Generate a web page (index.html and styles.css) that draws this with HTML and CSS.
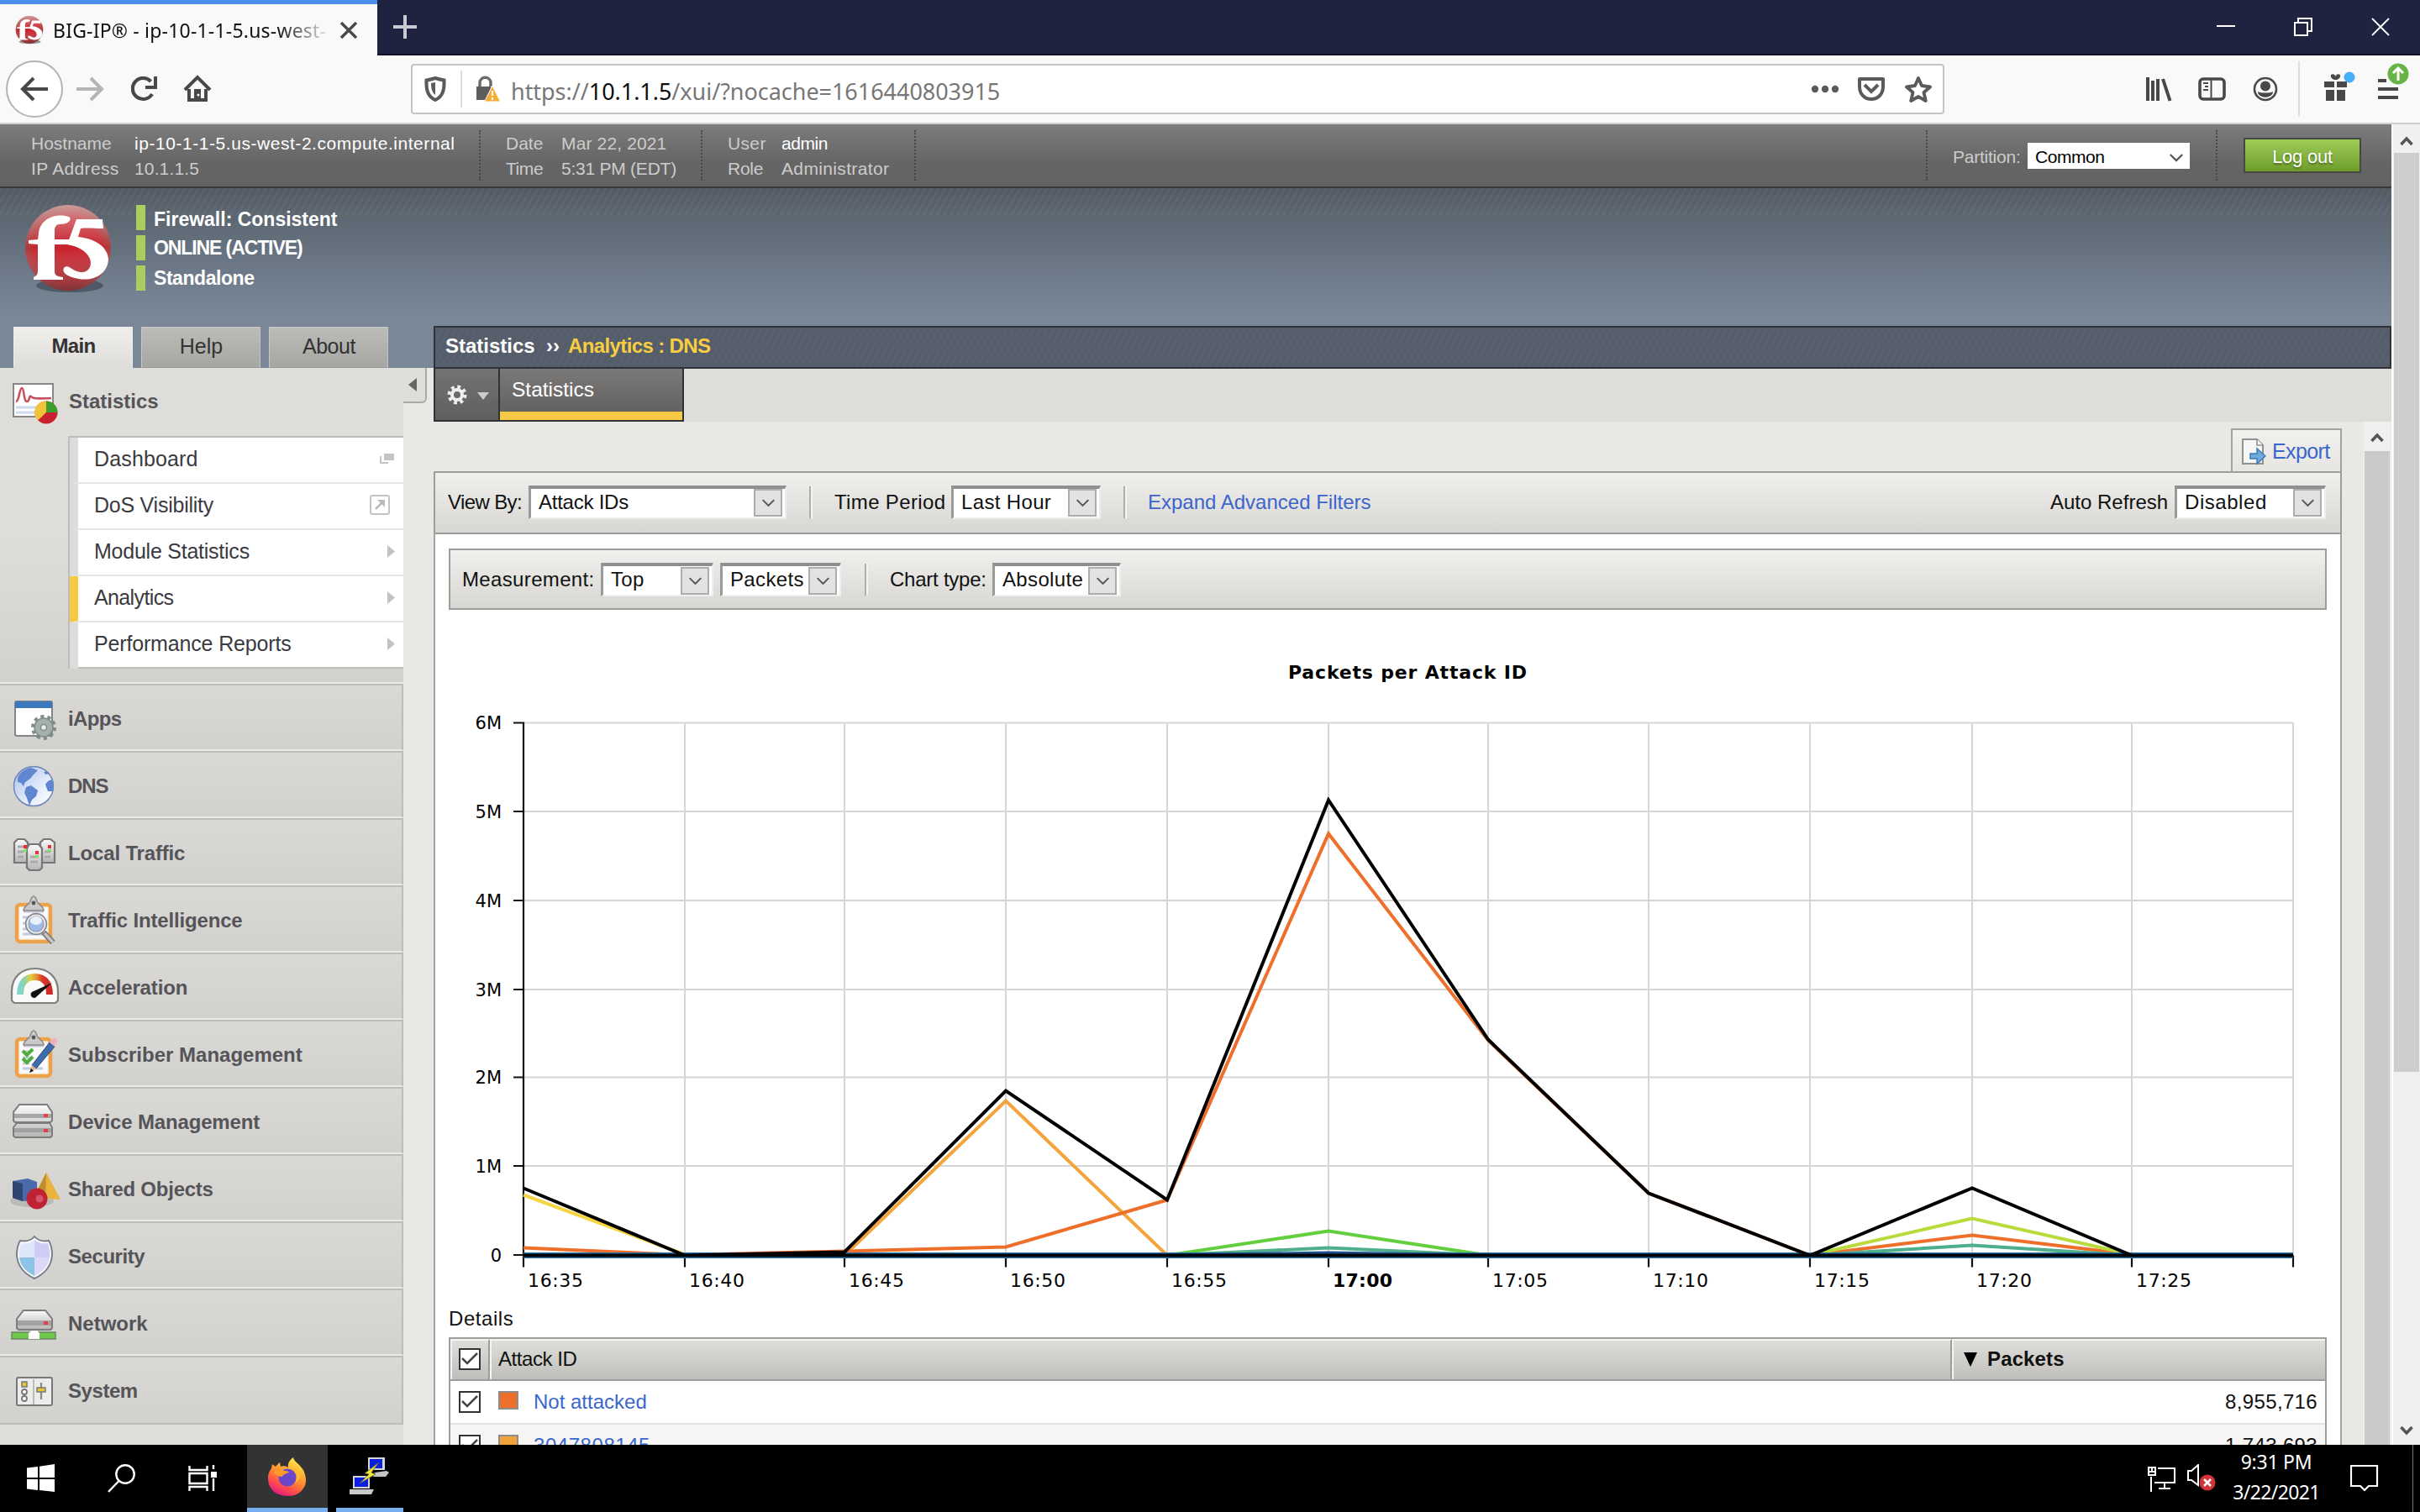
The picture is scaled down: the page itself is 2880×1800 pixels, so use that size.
FILE: index.html
```html
<!DOCTYPE html>
<html lang="en">
<head>
<meta charset="utf-8">
<title>BIG-IP® - ip-10-1-1-5.us-west-2.compute.internal</title>
<link rel="stylesheet" href="styles.css">
</head>
<body>
<svg class="defs" width="0" height="0">
  <defs>
    <radialGradient id="ball" cx=".5" cy=".55" r=".55"><stop offset="0" stop-color="#c8202b"/><stop offset=".7" stop-color="#c4262f"/><stop offset="1" stop-color="#9c4a48"/></radialGradient>
    <linearGradient id="shine" x1="0" y1="0" x2="0" y2="1"><stop offset="0" stop-color="#fff" stop-opacity=".45"/><stop offset=".5" stop-color="#fff" stop-opacity="0"/><stop offset="1" stop-color="#333" stop-opacity=".45"/></linearGradient>
    <linearGradient id="metal" x1="0" y1="0" x2="0" y2="1"><stop offset="0" stop-color="#fafafa"/><stop offset="1" stop-color="#b5b5b5"/></linearGradient>
    <linearGradient id="globe" x1="0" y1="0" x2="1" y2="1"><stop offset="0" stop-color="#a9c0ec"/><stop offset=".6" stop-color="#e4ecfb"/><stop offset="1" stop-color="#fff"/></linearGradient>
    <linearGradient id="gauge" x1="0" y1="0" x2="1" y2="0"><stop offset="0" stop-color="#7fd6cf"/><stop offset=".15" stop-color="#8fd3a8"/><stop offset=".35" stop-color="#e3cf3a"/><stop offset=".55" stop-color="#e8952f"/><stop offset=".75" stop-color="#d93a28"/><stop offset="1" stop-color="#cf2a2a"/></linearGradient>
    <linearGradient id="fox" x1=".8" y1="0" x2=".3" y2="1"><stop offset="0" stop-color="#fff14f"/><stop offset=".45" stop-color="#ff9a2e"/><stop offset=".75" stop-color="#ff4f4a"/><stop offset="1" stop-color="#e31587"/></linearGradient>
    <symbol id="f5" viewBox="0 0 104 106">
      <ellipse cx="54" cy="96" rx="40" ry="8" fill="#2b333d" opacity=".5"/>
      <circle cx="52" cy="51" r="51" fill="url(#ball)"/><circle cx="52" cy="51" r="51" fill="url(#shine)"/>
      <path d="M53 14C42 10 20 13 17 33l-1 8-11 1v4l11 1v31c0 6-3 7-5 8v3h35v-3c-9-1-10-3-10-8V47h17l1-6H36v-9c0-12 7-8 13-10 6-2 7-6 4-8z" fill="#fff"/>
      <path d="M62 17h31l1 11c-10 0-20-1-27 0l-3 10c21 2 36 13 36 27-1 17-17 26-35 23-14-2-21-8-18-13 5-6 11 5 21 5 9 0 13-8 10-16-4-10-16-15-27-17z" fill="#fff"/>
    </symbol>
    <symbol id="chev" viewBox="0 0 20 12"><path d="M2 2l8 8 8-8" fill="none" stroke="#555" stroke-width="2.4"/></symbol>
    <symbol id="tick" viewBox="0 0 20 16"><path d="M1 7l6 6L19 1" fill="none" stroke="#444" stroke-width="2.500"/></symbol>
    <symbol id="board" viewBox="0 0 60 60">
      <rect x="8" y="13" width="40" height="44" rx="4" fill="#f6efe4" stroke="#eca24a" stroke-width="4.500"/>
      <path d="M12 17h32v36H12z" fill="#fbfbff"/>
      <path d="M16 21h24M15 28h8M15 35h8M15 42h8M15 48h24" stroke="#c3c8e0" stroke-width="3"/>
      <path d="M16 20c0-6 6-6 8-11 1-4 2-6 4-6s3 2 4 6c2 5 8 5 8 11z" fill="#c9c9c9" stroke="#8b8b8b" stroke-width="1.5"/>
      <circle cx="28" cy="11" r="2.4" fill="#555"/>
    </symbol>
  </defs>
</svg>

<div class="tabstrip">
  <div class="tab">
    <svg class="tab-logo" width="34" height="34"><use href="#f5"/></svg>
    <span class="tab-title">BIG-IP® - ip-10-1-1-5.us-west-</span>
    <svg class="tab-close" width="22" height="22" viewBox="0 0 22 22"><path d="M2 2l18 18M20 2L2 20" stroke="#4a4a4a" stroke-width="3.4"/></svg>
  </div>
  <svg class="tab-new" width="30" height="30" viewBox="0 0 30 30"><path d="M15 1v28M1 15h28" stroke="#c9cad3" stroke-width="4"/></svg>
  <div class="win-controls">
    <svg width="22" height="22" viewBox="0 0 22 22"><path d="M0 10h22" stroke="#fff" stroke-width="2"/></svg>
    <svg width="22" height="22" viewBox="0 0 22 22"><path d="M1 6h15v15H1zM5 5V1h16v15h-4" fill="none" stroke="#fff" stroke-width="2"/></svg>
    <svg width="22" height="22" viewBox="0 0 22 22"><path d="M1 1l20 20M21 1L1 21" stroke="#fff" stroke-width="1.8"/></svg>
  </div>
</div>

<div class="toolbar">
  <div class="back"><svg width="34" height="30" viewBox="0 0 34 30"><path d="M33 15H3M16 2L3 15l13 13" fill="none" stroke="#48484a" stroke-width="4"/></svg></div>
  <svg class="fwd" width="34" height="30" viewBox="0 0 34 30"><path d="M1 15h30M18 2l13 13-13 13" fill="none" stroke="#b5b5b8" stroke-width="4"/></svg>
  <svg class="reload" width="32" height="30" viewBox="0 0 32 30"><path d="M25 21A12.5 12.5 0 1 1 23.500 6" fill="none" stroke="#48484a" stroke-width="4.200"/><path d="M31 0v15H17v-4h10V0z" fill="#48484a"/></svg>
  <svg class="home" width="34" height="34" viewBox="0 0 34 34"><path d="M2 18L17 3l15 15M7 17v13h20V17" fill="none" stroke="#48484a" stroke-width="4"/><path d="M13 17h8v14h-8z" fill="#48484a"/><circle cx="18" cy="24" r="1.500" fill="#fff"/></svg>
  <div class="urlbar">
    <svg class="shield" width="26" height="30" viewBox="0 0 26 30"><path d="M2.500 4.500Q8 3.500 13 2q5 1.500 10.500 2.500C24 16 22 24 13 28 4 24 2 16 2.500 4.500z" fill="none" stroke="#5a5a5c" stroke-width="4"/><path d="M13 7v15c-4-3-5-8-5-14z" fill="#5a5a5c"/></svg>
    <i class="url-sep"></i>
    <svg class="lock" width="30" height="32" viewBox="0 0 30 32"><path d="M5 14V9c0-9 13-9 13 0v4" fill="none" stroke="#6b6b6d" stroke-width="3.500"/><path d="M1 13h17v16H1z" fill="#5d5d5f"/><path d="M20 12l9.500 19h-19z" fill="#f8ab32" stroke="#fff" stroke-width="1"/><path d="M20 18v6M20 26v3" stroke="#fff" stroke-width="2.200"/></svg>
    <span class="url">https://<b>10.1.1.5</b>/xui/?nocache=1616440803915</span>
    <svg class="dots" width="34" height="10" viewBox="0 0 34 10"><g fill="#5a5a5c"><circle cx="5" cy="5" r="4.200"/><circle cx="17" cy="5" r="4.200"/><circle cx="29" cy="5" r="4.200"/></g></svg>
    <svg class="pocket" width="32" height="30" viewBox="0 0 32 30"><path d="M2 3h28v9c0 20-28 20-28 0z" fill="none" stroke="#5a5a5c" stroke-width="4" stroke-linejoin="round"/><path d="M8 10l8 8 8-8" fill="none" stroke="#5a5a5c" stroke-width="4"/></svg>
    <svg class="star" width="34" height="33" viewBox="0 0 34 33"><path d="M17 3l4 9 10 1.500-7.500 6.500 2.300 10L17 25l-8.800 5 2.300-10L3 13.500 13 12z" fill="none" stroke="#5a5a5c" stroke-width="3.800" stroke-linejoin="round"/></svg>
  </div>
  <svg class="lib" width="31" height="29" viewBox="0 0 31 29"><path d="M2 0v28M8 4v24M14 2v26M20 2l8.500 26" fill="none" stroke="#48484a" stroke-width="4"/></svg>
  <svg class="panes" width="33" height="28" viewBox="0 0 33 28"><rect x="2" y="2" width="29" height="24" rx="4" fill="none" stroke="#48484a" stroke-width="3.600"/><path d="M15.500 2v24" stroke="#48484a" stroke-width="2"/><path d="M6 7h6M8 11h4M6 15h6" stroke="#48484a" stroke-width="1.800"/></svg>
  <svg class="acct" width="30" height="30" viewBox="0 0 30 30"><circle cx="15" cy="15" r="13" fill="none" stroke="#48484a" stroke-width="2.600"/><circle cx="15" cy="11.500" r="6" fill="#48484a"/><path d="M6 18c3 2 15 2 18 0 0 9-18 9-18 0z" fill="#48484a"/></svg>
  <i class="tb-sep"></i>
  <svg class="gift" width="40" height="36" viewBox="0 0 40 36"><path d="M2 12h12v7H2zM17 12h12v7H17zM4 22h10v13H4zM17 22h10v13H17zM10 4c3-2 5 0 5.500 2C16 4 18 2 21 4c1 4-3 6-5.500 6S9 8 10 4z" fill="#48484a"/><circle cx="32" cy="7" r="6.500" fill="#45aef5"/></svg>
  <svg class="menu" width="40" height="46" viewBox="0 0 40 46"><path d="M2 21h10M2 31h24M2 41h24" stroke="#48484a" stroke-width="4"/><circle cx="26" cy="13" r="12.500" fill="#67b346"/><path d="M26 21V7M20 12l6-6 6 6" fill="none" stroke="#fff" stroke-width="3"/></svg>
</div>

<div class="viewport">
  <div class="page">
    <div class="topbar">
      <dl class="pair host"><dt>Hostname</dt><dd class="hi wide5">ip-10-1-1-5.us-west-2.compute.internal</dd><dt class="wide3">IP Address</dt><dd class="wide1">10.1.1.5</dd></dl>
      <dl class="pair date"><dt>Date</dt><dd class="wide1">Mar 22, 2021</dd><dt class="tight4">Time</dt><dd class="tight2">5:31 PM (EDT)</dd></dl>
      <dl class="pair user"><dt class="wide3">User</dt><dd class="hi tight4">admin</dd><dt class="tight2">Role</dt><dd class="wide3">Administrator</dd></dl>
      <div class="partition"><span class="tight2">Partition:</span><div class="flat-select"><span class="tight4">Common</span><svg width="18" height="11"><use href="#chev"/></svg></div></div>
      <div class="logout"><span class="tight2">Log out</span></div>
    </div>
    <div class="below">
      <div class="left">
        <div class="brand">
          <svg class="brand-ball" width="104" height="106"><use href="#f5"/></svg>
          <ul class="status"><li><span>Firewall: Consistent</span></li><li><span class="tight10">ONLINE (ACTIVE)</span></li><li><span class="tight4">Standalone</span></li></ul>
        </div>
        <div class="tabs"><div class="active"><span class="tight6">Main</span></div><div><span>Help</span></div><div><span class="tight4">About</span></div></div>
        <div class="side-row">
          <div class="side">
            <div class="stats">
              <div class="nav-head">
                <svg width="60" height="60" viewBox="0 0 60 60"><rect x="4" y="8" width="47" height="39" fill="#fff" stroke="#888" stroke-width="2"/><path d="M7 36h28M7 42h24" stroke="#c9daf0" stroke-width="3"/><path d="M7 29c4 0 4-16 7-16s2 16 6 16 2-8 5-6 1 3 24 2" fill="none" stroke="#c9525a" stroke-width="2.600"/><circle cx="43" cy="42" r="13.500" fill="#c8202e"/><path d="M43 42L33 51.500A13.500 13.500 0 0 1 43 28.500z" fill="#efc33a"/><path d="M43 42V28.500A13.500 13.500 0 0 1 56.500 42z" fill="#3f9f2e"/></svg>
                <span>Statistics</span>
              </div>
              <ul class="submenu">
                <li><span class="wide1">Dashboard</span><svg width="18" height="14" viewBox="0 0 18 14"><path d="M5 1h12v8H5z" fill="#c4c4c4"/><path d="M1 4v8h9" fill="none" stroke="#c4c4c4" stroke-width="2"/></svg></li>
                <li class="ext"><span class="tight2">DoS Visibility</span><svg width="24" height="24" viewBox="0 0 24 24"><rect x="1" y="1" width="22" height="22" rx="2" fill="#fff" stroke="#c4c4c4" stroke-width="2"/><path d="M7 17l7-7" stroke="#bbb" stroke-width="2.500"/><path d="M9 6h9v9z" fill="#bbb"/></svg></li>
                <li><span class="tight2">Module Statistics</span><svg width="9" height="15" viewBox="0 0 9 15"><path d="M0 0l9 7.500L0 15z" fill="#c2c2c2"/></svg></li>
                <li class="on"><span class="tight6">Analytics</span><svg width="9" height="15" viewBox="0 0 9 15"><path d="M0 0l9 7.500L0 15z" fill="#c2c2c2"/></svg></li>
                <li><span class="tight1">Performance Reports</span><svg width="9" height="15" viewBox="0 0 9 15"><path d="M0 0l9 7.500L0 15z" fill="#c2c2c2"/></svg></li>
              </ul>
            </div>
            <div class="nav"><svg width="60" height="60" viewBox="0 0 60 60"><rect x="6" y="11" width="44" height="41" rx="2" fill="#fff" stroke="#858585" stroke-width="2"/><path d="M6 11h44v8H6z" fill="#3c78bd"/><circle cx="40" cy="42" r="12.500" fill="none" stroke="#7f8c88" stroke-width="5" stroke-dasharray="4 3.850"/><circle cx="40" cy="42" r="11" fill="#a4b0ad" stroke="#7f8c88" stroke-width="1.500"/><circle cx="40" cy="42" r="3.500" fill="#e9eeec" stroke="#7f8c88" stroke-width="1.500"/></svg><span class="tight6">iApps</span></div>
            <div class="nav"><svg width="60" height="60" viewBox="0 0 60 60"><circle cx="28" cy="32" r="23.500" fill="url(#globe)" stroke="#6d86b8" stroke-width="1.500"/><path d="M9 22c3-7 9-11 16-12l8 3-5 5-4 5-6 4-2 5-3-4-4-1zM19 33l6-2 8 6-2 7-5 4-3 7-3-9-3-6zM51 24c-4 0-7 2-9 6l3 8 6 0zM40 15l4-1 3 3-5 1z" fill="#5f86cf"/></svg><span class="tight10">DNS</span></div>
            <div class="nav"><svg width="60" height="60" viewBox="0 0 60 60"><g fill="url(#metal)" stroke="#777" stroke-width="2.200"><path d="M5 19l4-4h8l4 4v24H5zM36 19l4-4h8l5 4v24H36z"/><path d="M20 26l3-5h11l4 5v23l-3 3H23l-3-3z"/></g><path d="M9 24h7M9 30h7M9 36h7M41 30h7M41 36h7M24 36h9M24 42h9" stroke="#aaa" stroke-width="3"/><path d="M16 22h4v4h-4zM45 22h4v4h-4zM30 29h4v4h-4z" fill="#e5303c"/><path d="M16 27h4v3h-4zM45 27h4v3h-4zM30 34h4v3h-4z" fill="#7ce35a"/></svg><span class="tight1">Local Traffic</span></div>
            <div class="nav"><svg width="60" height="60" viewBox="0 0 60 60"><use href="#board"/><path d="M40 46l11 12" stroke="#777" stroke-width="7"/><path d="M41 47l10 11" stroke="#c4c4c4" stroke-width="3.500"/><circle cx="31" cy="36" r="11" fill="#9dbbe6" stroke="#888" stroke-width="4.500"/><circle cx="31" cy="36" r="10.500" fill="none" stroke="#e4e8ee" stroke-width="2"/><ellipse cx="31" cy="32" rx="7" ry="5" fill="#e8f1fc"/></svg><span class="tight1">Traffic Intelligence</span></div>
            <div class="nav"><svg width="60" height="60" viewBox="0 0 60 60"><path d="M2 47V36C2 19 14 9 29.500 9S57 19 57 36v11l-3 3H5z" fill="#fafafa" stroke="#808080" stroke-width="2.200"/><path d="M12 40c0-14 7-21 17.500-21S47 26 47 40" fill="none" stroke="url(#gauge)" stroke-width="8"/><path d="M50 26L32 42a4 4 0 1 1-4-6z" fill="#111"/></svg><span class="tight1">Acceleration</span></div>
            <div class="nav"><svg width="60" height="60" viewBox="0 0 60 60"><use href="#board"/><path d="M15 27l5 5 7-7M15 36l5 5 7-7" fill="none" stroke="#4fae3a" stroke-width="4"/><path d="M26 44L47 17l6 5-22 26z" fill="#3f6cab" stroke="#2c4d80" stroke-width="1"/><path d="M47 17l4-5c3-1 6 2 5 5l-3 5z" fill="#eeb0c0"/><path d="M26 44l5 4-8 5z" fill="#ddb783"/><path d="M23 53l2-5 3 3z" fill="#111"/></svg><span>Subscriber Management</span></div>
            <div class="nav"><svg width="60" height="60" viewBox="0 0 60 60"><g fill="url(#metal)" stroke="#7d7d7d" stroke-width="2"><path d="M4 20l7-9h33l6 9v10l-2 2H6l-2-2zM4 38l4-5h39l3 5v10l-2 2H6l-2-2z"/></g><path d="M5 22h44v5H5zM5 39h44v5H5z" fill="#999" opacity=".8"/><path d="M40 22h5v4h-5zM40 40h5v4h-5z" fill="#e5404a"/></svg><span class="tight1">Device Management</span></div>
            <div class="nav"><svg width="60" height="60" viewBox="0 0 60 60"><ellipse cx="26" cy="46" rx="26" ry="7" fill="#aaa" opacity=".6"/><path d="M3 22l18-3 11 4v22l-17 1-12-4z" fill="#4a6ba8"/><path d="M3 22l12 3v21L3 42z" fill="#2f4472"/><path d="M43 12L30 38l14 5 16 1z" fill="#e9b33d"/><path d="M43 12L30 38l12 5z" fill="#c08f2c"/><circle cx="32" cy="43" r="12.500" fill="#bf2233"/><circle cx="35" cy="43" r="4.500" fill="#e0688a" opacity=".7"/></svg><span class="tight2">Shared Objects</span></div>
            <div class="nav"><svg width="60" height="60" viewBox="0 0 60 60"><path d="M29 8c4 5 11 6 17 5 3 5 4 10 4 17-1 14-10 23-21 28C18 53 9 44 8 30c0-7 1-12 4-17 6 1 13 0 17-5z" fill="#fff" stroke="#7a7f8c" stroke-width="2"/><path d="M29 12v21H11c-1-6 0-11 2-17 7 1 12-1 16-4z" fill="#dfe6fa"/><path d="M29 12c4 3 9 5 16 4 2 6 3 11 2 17H29z" fill="#cfcdf4"/><path d="M11 33h18v22C19 50 12 43 11 33z" fill="#8cc3e6"/><path d="M47 33H29v22c10-5 17-12 18-22z" fill="#dcd9f8"/></svg><span class="tight4">Security</span></div>
            <div class="nav"><svg width="60" height="60" viewBox="0 0 60 60"><path d="M8 26l8-10h26l8 10v11l-2 2H10l-2-2z" fill="url(#metal)" stroke="#7d7d7d" stroke-width="2"/><path d="M9 28h40v6H9z" fill="#999" opacity=".8"/><path d="M40 29h5v4h-5z" fill="#e5404a"/><path d="M2 42h52v8H2z" fill="#6fca4c" stroke="#6c8560" stroke-width="1.500"/><path d="M22 50v-7l4-3h6l3 3v7z" fill="#fff"/></svg><span>Network</span></div>
            <div class="nav"><svg width="60" height="60" viewBox="0 0 60 60"><rect x="8" y="16" width="42" height="33" rx="2" fill="#ececea" stroke="#777" stroke-width="2"/><path d="M28 18v30" stroke="#bbb" stroke-width="2"/><path d="M14 21h6v6h-6z" fill="#e3c72c" stroke="#777" stroke-width="1.500"/><circle cx="17" cy="33" r="3" fill="#fff" stroke="#777" stroke-width="1.800"/><circle cx="17" cy="41" r="3" fill="#fff" stroke="#777" stroke-width="1.800"/><path d="M37 22v20" stroke="#888" stroke-width="2.200"/><path d="M32 28h10v5H32z" fill="#e3c72c" stroke="#777" stroke-width="1.500"/></svg><span class="tight4">System</span></div>
          </div>
          <div class="toggle"><svg width="10" height="16" viewBox="0 0 10 16"><path d="M10 0v16L0 8z" fill="#666"/></svg></div>
        </div>
      </div>

      <div class="main">
        <div class="crumbs"><b>Statistics</b><b class="raquo">››</b><b class="here tight6">Analytics : DNS</b></div>
        <div class="subtabs">
          <div class="gear"><svg width="24" height="24" viewBox="0 0 24 24"><circle cx="12" cy="12" r="9" fill="none" stroke="#eee" stroke-width="5" stroke-dasharray="3.600 3.470"/><circle cx="12" cy="12" r="6" fill="none" stroke="#eee" stroke-width="4"/></svg><svg width="14" height="9" viewBox="0 0 14 9"><path d="M0 0h14L7 9z" fill="#ccc"/></svg></div>
          <div class="subtab"><span>Statistics</span></div>
        </div>
        <div class="frame-row">
          <div class="frame">
            <div class="export"><svg width="30" height="32" viewBox="0 0 30 32"><path d="M2 1h17l7 7v22H2z" fill="#f6f6f4" stroke="#909090" stroke-width="2"/><path d="M19 1v7h7" fill="#fff" stroke="#909090" stroke-width="1.600"/><path d="M11 18h8v-6l10 9-10 9v-6h-8z" fill="#6fa9dc" stroke="#3f7cb8" stroke-width="1.500"/></svg><span class="tight6">Export</span></div>
            <div class="filters">
              <span class="tight6">View By:</span><div class="select"><span class="tight2">Attack IDs</span><i><svg width="17" height="11"><use href="#chev"/></svg></i></div><i class="vsep"></i>
              <span class="wide3">Time Period</span><div class="select"><span class="wide3">Last Hour</span><i><svg width="17" height="11"><use href="#chev"/></svg></i></div><i class="vsep"></i>
              <a>Expand Advanced Filters</a>
              <span>Auto Refresh</span><div class="select"><span class="wide5">Disabled</span><i><svg width="17" height="11"><use href="#chev"/></svg></i></div>
            </div>
            <div class="panel">
              <div class="measure">
                <span class="wide3">Measurement:</span><div class="select"><span class="wide3">Top</span><i><svg width="17" height="11"><use href="#chev"/></svg></i></div><div class="select"><span class="wide3">Packets</span><i><svg width="17" height="11"><use href="#chev"/></svg></i></div><i class="vsep"></i>
                <span class="tight2">Chart type:</span><div class="select"><span class="wide3">Absolute</span><i><svg width="17" height="11"><use href="#chev"/></svg></i></div>
              </div>
              <svg class="chart" width="2235" height="820" viewBox="534 727.5 2235 820">
                <text class="chart-title" x="1533" y="808" textLength="284">Packets per Attack ID</text>
                <path class="grid" d="M623 861H2729M623 966.500H2729M623 1072.500H2729M623 1178.500H2729M623 1283H2729M623 1388.500H2729M815 861v634M1005 861v634M1197 861v634M1389 861v634M1581 861v634M1771 861v634M1962 861v634M2154 861v634M2347 861v634M2537 861v634M2729 861v634"/>
                <path class="axis" d="M623 860V1509M611 861h12M611 966.500h12M611 1072.500h12M611 1178.500h12M611 1283h12M611 1388.500h12M611 1494.500h12M815 1495v14M1005 1495v14M1197 1495v14M1389 1495v14M1581 1495v14M1771 1495v14M1962 1495v14M2154 1495v14M2347 1495v14M2537 1495v14M2729 1495v14"/>
                <g class="ylab"><text x="597" y="868">6M</text><text x="597" y="974">5M</text><text x="597" y="1080">4M</text><text x="597" y="1186">3M</text><text x="597" y="1290">2M</text><text x="597" y="1396">1M</text><text x="597" y="1502">0</text></g>
                <g class="series">
                  <path stroke="#f6d544" d="M623 1423L815 1494"/>
                  <path stroke="#f4a43a" d="M1005 1495L1197 1311 1389 1495"/>
                  <path stroke="#ee6f2a" d="M623 1486L815 1494.500 1005 1490 1197 1485 1389 1429 1581 993 1771 1239 1962 1421 2154 1495 2347 1471 2537 1494"/>
                  <path stroke="#b9dc3c" d="M2154 1495L2347 1451 2537 1494"/>
                  <path stroke="#63cf3e" d="M1389 1495L1581 1466 1771 1495"/>
                  <path stroke="#4fae8c" d="M1389 1495L1581 1486 1771 1495M2154 1495L2347 1483 2537 1495"/>
                  <path class="base" stroke="#2571a8" d="M623 1495H2729"/>
                  <path stroke="#1c4f8a" d="M1389 1495L1581 1492 1771 1495"/>
                  <path stroke="#000" d="M623 1415L815 1495 1005 1491 1197 1299 1389 1429 1581 953 1771 1238 1962 1421 2154 1495 2347 1415 2537 1495H2729M623 1495H2729"/>
                </g>
                <g class="xlab"><text x="628" y="1532" textLength="66">16:35</text><text x="820" y="1532" textLength="66">16:40</text><text x="1010" y="1532" textLength="66">16:45</text><text x="1202" y="1532" textLength="66">16:50</text><text x="1394" y="1532" textLength="66">16:55</text><text class="bold" x="1586" y="1532" textLength="71">17:00</text><text x="1776" y="1532" textLength="66">17:05</text><text x="1967" y="1532" textLength="66">17:10</text><text x="2159" y="1532" textLength="66">17:15</text><text x="2352" y="1532" textLength="66">17:20</text><text x="2542" y="1532" textLength="66">17:25</text></g>
              </svg>
              <div class="details"><span class="wide5">Details</span></div>
              <div class="table">
                <div class="row head"><div><i class="check"><svg width="20" height="16"><use href="#tick"/></svg></i></div><div><span class="tight4">Attack ID</span></div><div class="num"><svg width="16" height="17" viewBox="0 0 16 17"><path d="M0 0h16L8 17z"/></svg><b class="wide1">Packets</b></div></div>
                <div class="row"><div><i class="check"><svg width="20" height="16"><use href="#tick"/></svg></i></div><div><i class="swatch one"></i><a>Not attacked</a></div><div class="num"><span class="wide3">8,955,716</span></div></div>
                <div class="row alt"><div><i class="check"><svg width="20" height="16"><use href="#tick"/></svg></i></div><div><i class="swatch two"></i><a class="wide5">3047808145</a></div><div class="num"><span class="wide3">1,743,693</span></div></div>
              </div>
            </div>
          </div>
          <div class="inner-scroll"><svg width="16" height="14" viewBox="0 0 16 14"><path d="M1.500 11L8 4l6.500 7" fill="none" stroke="#555" stroke-width="3.500"/></svg><i></i></div>
        </div>
      </div>
    </div>
  </div>
  <div class="outer-scroll"><svg width="16" height="14" viewBox="0 0 16 14"><path d="M1.500 11L8 4l6.500 7" fill="none" stroke="#555" stroke-width="3.500"/></svg><i></i><svg width="16" height="14" viewBox="0 0 16 14"><path d="M1.500 3L8 10l6.500-7" fill="none" stroke="#555" stroke-width="3.500"/></svg></div>
</div>

<div class="taskbar">
  <svg class="t-win" width="34" height="34" viewBox="0 0 34 34"><path d="M0 4.500L13 3v13H0zM15 2.700L33 0v16H15zM0 18h13v13L0 29.500zM15 18h18v15L15 31z" fill="#fff"/></svg>
  <svg class="t-search" width="34" height="34" viewBox="0 0 34 34"><circle cx="21" cy="12" r="10.700" fill="none" stroke="#fff" stroke-width="2.400"/><path d="M13.500 20L1 33" stroke="#fff" stroke-width="2.400"/></svg>
  <svg class="t-view" width="34" height="32" viewBox="0 0 34 32"><path d="M1.500 1v5h21V1M1.500 10h21v12h-21zM1.500 31v-5h21v5M30 0v5M30 16v15" fill="none" stroke="#fff" stroke-width="2.400"/><path d="M27 8h7v7h-7z" fill="#fff"/></svg>
  <div class="t-fox"><svg width="48" height="48" viewBox="0 0 48 48"><path d="M1 26c0-6 2-9 4-12l1-5 4 3c2-2 3-4 5-5l1 5c3-1 6-1 9 1-1-5 2-9 6-12 1 5 5 6 8 10l4 5c4 9 4 16 0 22-4 6-10 9-18 9C12 47 1 40 1 26z" fill="url(#fox)"/><circle cx="24" cy="25" r="10.500" fill="#6a46c9"/><path d="M8 19c6-5 10-3 13-2 3 0 5 1 5 2-4 1-8 3-8 5-5 0-8-3-10-5z" fill="#ff9b2b"/><path d="M30 11c7 6 7 14 3 21 8-5 9-16-3-21z" fill="#ffbf35"/></svg></div>
  <div class="t-putty"><svg width="48" height="48" viewBox="0 0 48 48"><path d="M22 1h20v15H22z" fill="#d5d5d5"/><path d="M24 3h15v11H24z" fill="#0a1fe0"/><path d="M30 19l14-2 3 2-4 5H28z" fill="#c4c4c4"/><path d="M4 23h20v15H4z" fill="#d5d5d5"/><path d="M6 25h16v11H6z" fill="#0a1fe0"/><path d="M0 39h29l-3 6H0z" fill="#c9c9c9"/><path d="M35 7L18 20l5 1-11 11 19-11-5-2z" fill="#f1e72b" stroke="#555" stroke-width=".8"/></svg></div>
  <div class="tray">
    <svg width="34" height="32" viewBox="0 0 34 32"><path d="M12 4h20v17H8M20 21v7M13 28h14M4 14v18" fill="none" stroke="#fff" stroke-width="2"/><path d="M1 3h8v9H1zM1 8h8M5 3v5" fill="none" stroke="#fff" stroke-width="2"/></svg>
    <svg width="34" height="34" viewBox="0 0 34 34"><path d="M1 8h4l8-7v24l-8-6H1z" fill="none" stroke="#fff" stroke-width="2"/><circle cx="24" cy="22" r="9.500" fill="#d2343a"/><path d="M20 18l8 8M28 18l-8 8" stroke="#fff" stroke-width="2.500"/></svg>
    <div class="clock"><span class="tight2">9:31 PM</span><span class="tight6">3/22/2021</span></div>
    <svg width="34" height="32" viewBox="0 0 34 32"><path d="M1 1h31v24h-10l-5 5-5-5H1z" fill="none" stroke="#fff" stroke-width="2.200"/></svg>
    <i></i>
  </div>
</div>
</body>
</html>
```
FILE: styles.css
```css
* { box-sizing: border-box; margin: 0; padding: 0; }
body { width: 2880px; height: 1800px; overflow: hidden; display: flex; flex-direction: column; font-family: "Liberation Sans", Arial, sans-serif; font-size: 24px; color: #111; white-space: nowrap; background: #e9e8e4; }
i { font-style: normal; display: block; }
svg { display: block; flex: none; }
ul { list-style: none; }
.defs { position: absolute; }

/* letter tracking */
.tight1 { letter-spacing: -.16px; }
.tight2 { letter-spacing: -.24px; }
.tight4 { letter-spacing: -.44px; }
.tight6 { letter-spacing: -.62px; }
.tight10 { letter-spacing: -1.1px; }
.wide1 { letter-spacing: .14px; }
.wide3 { letter-spacing: .35px; }
.wide5 { letter-spacing: .55px; }

/* browser chrome */
.tabstrip { height: 66px; flex: none; display: flex; align-items: center; background: #20233f; border-bottom: 2px solid #0f1028; font-family: "Noto Sans", sans-serif; }
.tab { width: 449px; height: 66px; align-self: flex-start; display: flex; align-items: center; padding: 1px 0 0 18px; background: #f9f9fa; border-top: 5px solid #4a90ea; }
.tab-title { width: 333px; margin-left: 11px; font-size: 23px; letter-spacing: .2px; overflow: hidden; -webkit-mask-image: linear-gradient(90deg, #000 80%, transparent); mask-image: linear-gradient(90deg, #000 80%, transparent); }
.tab-close { margin-left: 8px; }
.tab-new { margin-left: 18px; }
.win-controls { margin-left: auto; margin-right: 36px; display: flex; gap: 70px; }
.toolbar { height: 82px; flex: none; display: flex; align-items: center; background: #f9f9fa; border-bottom: 2px solid #cfcfd1; }
.back { width: 68px; height: 68px; margin-left: 7px; border: 2px solid #b3b3b5; border-radius: 50%; background: #fff; display: flex; align-items: center; justify-content: center; }
.fwd { margin-left: 15px; }
.reload { margin-left: 32px; }
.home { margin-left: 30px; }
.urlbar { width: 1825px; height: 60px; margin-left: 237px; border: 2px solid #c4c4c6; border-radius: 4px; background: #fff; display: flex; align-items: center; }
.shield { margin-left: 14px; }
.url-sep { width: 2px; height: 44px; margin-left: 17px; background: #dcdcde; }
.lock { margin-left: 16px; }
.url { width: 582px; margin-left: 12px; padding-top: 4px; font: 27px "Noto Sans", sans-serif; letter-spacing: -.04px; color: #777; }
.url b { font-weight: 400; color: #0c0c0d; }
.dots { margin-left: 965px; }
.pocket { margin-left: 22px; }
.star { margin-left: 23px; }
.lib { margin-left: 240px; }
.panes { margin-left: 31px; }
.acct { margin-left: 32px; }
.tb-sep { width: 2px; height: 66px; margin-left: 24px; background: #dcdcde; }
.gift { margin-left: 27px; margin-bottom: 6px; }
.menu { margin-left: 24px; margin-bottom: 16px; }

.viewport { height: 1572px; flex: none; display: flex; }
.page { width: 2846px; flex: none; display: flex; flex-direction: column; overflow: hidden; }

/* identity bar */
.topbar { height: 76px; flex: none; display: flex; align-items: center; background: linear-gradient(#7d7d7d, #656565 60%, #636363); border-bottom: 2px solid #383b3e; color: #ccc; font-size: 21px; }
.pair { height: 60px; padding-top: 1px; display: grid; grid-template-rows: 30px 30px; align-items: center; border-right: 2px dotted #484848; }
.pair dt, .pair dd { justify-self: start; }
.host { width: 572px; padding-left: 37px; grid-template-columns: 123px 1fr; }
.date { width: 264px; padding-left: 30px; grid-template-columns: 66px 1fr; }
.user { width: 254px; padding-left: 30px; grid-template-columns: 64px 1fr; }
.hi { color: #fff; }
.partition { width: 347px; height: 60px; margin-left: 1202px; padding-left: 30px; display: flex; align-items: center; border-left: 2px dotted #484848; border-right: 2px dotted #484848; }
.partition > span { width: 89px; padding-top: 3px; }
.flat-select { width: 193px; height: 31px; padding: 3px 7px 0 9px; display: flex; align-items: center; justify-content: space-between; background: #fff; color: #000; }
.flat-select svg { margin-top: 2px; }
.logout { width: 140px; height: 42px; margin-left: 31px; border: 2px solid #45493f; background: linear-gradient(#a0cc58, #6d9c2c); color: #fff; font-size: 22px; text-shadow: 0 2px 2px #4c6c20; display: flex; align-items: center; justify-content: center; padding-top: 3px; }

/* banner and columns */
.below { flex: 1; min-height: 0; display: grid; grid-template-columns: 516px 1fr; background: repeating-linear-gradient(120deg, rgba(255,255,255,.035) 0 3px, transparent 3px 7px) 0 0/100% 32px no-repeat, linear-gradient(#525a63, #5c6671 32px, #687482 80px, #748191 126px, #7a8797 152px, #7a8797 214px) 0 0/100% 214px no-repeat, #e9e8e4; }
.left, .main { min-width: 0; display: flex; flex-direction: column; }
.brand { height: 165px; flex: none; display: flex; padding: 20px 0 0 29px; }
.status { margin-left: 29px; display: flex; flex-direction: column; gap: 6px; color: #fff; font-size: 23px; font-weight: 700; }
.status li { height: 30px; display: flex; align-items: center; padding: 4px 0 0 10px; border-left: 11px solid #aacd60; }
.status li:nth-child(2), .status li:nth-child(3) { padding-top: 0; }
.tabs { height: 49px; flex: none; display: flex; gap: 10px; padding-left: 16px; font-size: 25px; color: #333; }
.tabs div { width: 142px; padding: 0 0 3px 1px; display: flex; align-items: center; justify-content: center; background: linear-gradient(#bcbcb8, #a5a5a1); border: 1px solid #c6c6c3; border-bottom: 1px solid #9a9a96; }
.tabs .active { background: linear-gradient(#f0efec, #deddd9); border-color: #eee; border-bottom-color: #deddd9; font-weight: 700; font-size: 24px; }
.side-row { flex: 1; display: flex; align-items: flex-start; }
.side { width: 480px; height: 1282px; background: #deddd9; color: #555459; }
.stats { height: 376px; background: linear-gradient(#deddd9 55%, #d2d1cd); display: flex; flex-direction: column; border-bottom: 2px solid #ecebe8; }
.nav-head { height: 81px; display: flex; align-items: center; padding-left: 12px; }
.nav-head span, .nav span { margin-left: 9px; font-weight: 700; font-size: 24px; }
.nav-head span { margin: -2px 0 0 10px; }
.submenu { height: 277px; margin-left: 81px; border: 2px solid #bdbdba; border-right: 0; background: #fff; }
.submenu li { height: 55px; display: flex; align-items: center; justify-content: space-between; padding: 0 10px 3px 19px; border-left: 10px solid #dcdcdc; border-bottom: 2px solid #e6e6e6; font-size: 25px; color: #3a3a40; }
.submenu li.on { border-left-color: #f7ca45; }
.submenu li:last-child { border-bottom: 0; padding-bottom: 5px; }
.submenu .ext { padding-right: 16px; }
.nav { height: 80px; display: flex; align-items: center; padding-left: 12px; border-top: 2px solid #bdbcb9; border-bottom: 2px solid #ecebe8; border-right: 2px solid #bdbcb9; background: linear-gradient(#dad9d5, #d2d1cd); }
.nav span { padding-top: 3px; }
.side .nav:last-child { border-bottom-color: #bdbcb9; height: 82px; padding-bottom: 2px; }
.toggle { width: 28px; height: 42px; display: flex; align-items: center; justify-content: flex-end; padding-right: 10px; background: #deddd9; border: 2px solid #aaa9a6; border-width: 0 2px 2px 0; border-radius: 0 0 6px 0; }

/* main column */
.crumbs { height: 51px; flex: none; margin-top: 164px; padding: 0 0 4px 12px; display: grid; grid-template-columns: 120px 26px 1fr; align-items: center; justify-items: start; background: repeating-linear-gradient(120deg, rgba(255,255,255,.02) 0 3px, transparent 3px 7px), #545d69; border: 2px solid #2e3338; color: #fff; font-size: 24px; }
.here { color: #f8cd42; }
.subtabs { height: 63px; flex: none; display: flex; background: #deddd9; }
.gear { width: 79px; display: flex; align-items: center; gap: 12px; padding-left: 14px; background: linear-gradient(#757372, #605f5e); border: 2px solid #2e3338; border-top: 0; }
.gear svg + svg { margin-top: 4px; }
.subtab { width: 219px; padding: 11px 0 0 14px; background: linear-gradient(#7b7978, #5f5e5d); border: 2px solid #2e3338; border-width: 0 2px 2px 0; box-shadow: inset 0 -10px #f7ca45; color: #fff; font-size: 24.500px; }
.frame-row { flex: 1; min-height: 0; display: flex; }
.frame { width: 2297px; min-width: 0; padding: 8px 26px 0 0; display: flex; flex-direction: column; }
.export { width: 132px; height: 51px; flex: none; align-self: flex-end; display: flex; align-items: center; gap: 7px; padding: 2px 0 0 10px; border: 2px solid #a3a3a1; border-bottom: 0; background: linear-gradient(#f1f0ee, #e6e5e2); color: #3a66cc; font-size: 25px; }
a { color: #3a66cc; }
.filters, .measure { border: 2px solid #9d9d9b; background: linear-gradient(#f1f0ee, #d7d6d2); display: grid; align-items: center; justify-items: start; }
.filters { height: 75px; flex: none; padding: 0 0 2px 15px; grid-template-columns: 96px 334px 30px 139px 205px 29px 1074px 148px 1fr; }
.select { height: 40px; display: flex; align-items: center; justify-content: space-between; padding: 0 3px 0 9px; background: #fff; border: 2px solid #eee; border-top: 4px solid #8f8f8f; border-left: 3px solid #9a9a9a; justify-self: stretch; }
.select i { width: 34px; height: 33px; display: flex; align-items: center; justify-content: center; background: #e2e2e2; border: 2px solid #adadad; }
.select span { margin-top: -2px; }
.filters .select { margin-right: 27px; }
.filters .select:last-child { margin-right: 17px; }
.vsep { width: 2px; height: 38px; background: #aeaeac; box-shadow: 2px 0 #f4f4f2; }
.panel { flex: 1; min-height: 0; border: 2px solid #a3a3a1; border-width: 0 2px; background: #fff; padding: 17px 16px 0; overflow: hidden; }
.measure { height: 73px; padding: 1px 0 0 14px; grid-template-columns: 165px 142px 172px 30px 122px 153px 1fr; }
.measure .select { width: 134px; }
.measure .select:nth-of-type(2) { width: 144px; }
.measure .select:nth-of-type(3) { width: 153px; }
.chart { margin-top: 1px; font-family: "DejaVu Sans", Verdana, sans-serif; font-size: 22px; }
.chart-title { font-weight: 700; font-size: 22px; }
.ylab { font-size: 21px; }
.grid { fill: none; stroke: #d6d6d6; stroke-width: 2; }
.axis { fill: none; stroke: #111; stroke-width: 2.200; }
.series path { fill: none; }
.series { stroke-width: 4; stroke-linejoin: miter; }
.series .base { stroke-width: 7; }
.ylab { text-anchor: end; }
.bold { font-weight: 700; }
.details { height: 45px; display: flex; align-items: center; }
.table { border: 2px solid #9d9d9b; }
.row { height: 52px; display: grid; grid-template-columns: 47px 1740px 1fr; align-items: center; border-bottom: 2px solid #e2e2e2; }
.row > div { display: flex; align-items: center; padding-left: 10px; height: 100%; }
.row.head { height: 50px; border-bottom-color: #9d9d9b; }
.row.head > div { padding-left: 8px; padding-bottom: 2px; background: linear-gradient(#dfdeda, #bfbeba); border-left: 2px solid #f4f4f2; border-top: 2px solid #f4f4f2; border-right: 2px solid #9d9d9b; }
.row.head > .num { justify-content: flex-start; padding-left: 12px; gap: 12px; border-right: 0; }
.row.alt { background: #f6f5f3; }
.row .num { justify-content: flex-end; padding-right: 9px; }
.row.head .num { justify-content: flex-start; }
.check { width: 26px; height: 26px; border: 2px solid #333; background: #fff; display: flex; align-items: center; justify-content: center; }
.swatch { width: 24px; height: 22px; margin: 0 18px 4px 0; border: 2px solid #8c8c8c; }
.one { background: #ee6f2a; }
.two { background: #f2a23b; }

/* scrollbars */
.inner-scroll { width: 32px; display: flex; flex-direction: column; align-items: center; background: #f0f0f0; padding-top: 12px; }
.inner-scroll i { width: 30px; margin-top: 9px; flex: 1; background: #cacaca; }
.outer-scroll { width: 34px; padding: 13px 0 10px; display: flex; flex-direction: column; align-items: center; background: #f0f0f0; border-left: 2px solid #fff; }
.outer-scroll i { width: 30px; height: 1094px; margin: 7px 0 auto; background: #cdcdcd; }

/* taskbar */
.taskbar { height: 80px; flex: none; display: flex; align-items: center; background: #000; color: #fff; font-size: 23px; font-family: "Noto Sans", sans-serif; }
.t-win { margin-left: 32px; }
.t-search { margin-left: 62px; }
.t-view { margin-left: 62px; }
.t-fox { width: 96px; height: 80px; margin-left: 36px; background: #333; border-bottom: 5px solid #76b0ee; display: flex; align-items: center; justify-content: center; }
.t-putty { width: 80px; height: 80px; margin-left: 10px; border-bottom: 5px solid #76b0ee; display: flex; align-items: center; justify-content: center; }
.tray { margin-left: auto; display: flex; align-items: center; }
.tray > svg:nth-child(2) { margin-left: 13px; }
.clock { width: 150px; display: flex; flex-direction: column; align-items: center; line-height: 36px; margin: -4px 13px 0 -3px; }
.tray i { width: 1px; height: 80px; margin: 0 8px 0 40px; background: #777; }
```
